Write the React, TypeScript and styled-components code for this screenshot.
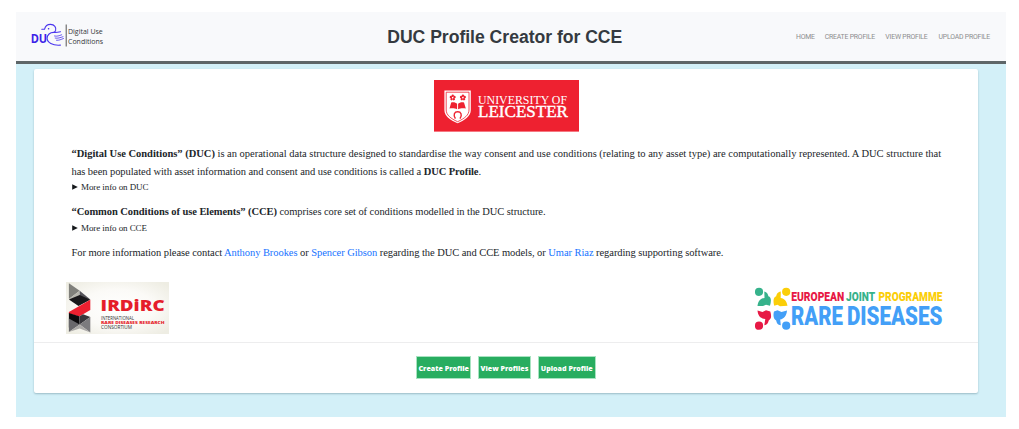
import React from "react";
import styled, { createGlobalStyle } from "styled-components";

const GlobalStyle = createGlobalStyle`
  * { box-sizing: border-box; }
  body { margin: 0; background: #fff; color: #212529; font-family: "Liberation Sans", Arial, sans-serif; }
`;

const Page = styled.div`
  width: 990px;
  height: 405px;
  margin: 12px 0 12px 16px;
  background: #d3f0f8;
`;

const Header = styled.header`
  height: 52px;
  display: grid;
  grid-template-columns: 1fr auto 1fr;
  align-items: center;
  padding: 0 15.5px 3px 14px;
  background: #f8f9fb;
  border-bottom: 3px solid #5e6668;
`;

const Title = styled.h1`
  margin: 3px 11px 0 0;
  font-size: 17.6px;
  line-height: 20px;
  letter-spacing: -0.02px;
  color: #343a40;
  white-space: nowrap;
`;

const Nav = styled.nav`
  display: flex;
  justify-content: flex-end;
  gap: 10.7px;
  padding-top: 4px;
`;

const NavLink = styled.a<{ $width: number }>`
  width: ${(p) => p.$width}px;
  font-family: Roboto, sans-serif;
  font-size: 6.9px;
  line-height: 10px;
  letter-spacing: -0.2px;
  color: #8c8d8e;
  white-space: nowrap;
`;

const Card = styled.main`
  display: flex;
  flex-direction: column;
  width: 944px;
  height: 324px;
  margin: 5px 0 0 18px;
  background: #fff;
  border-radius: 2px;
  box-shadow: 0 1px 2px rgba(70, 110, 125, 0.4);
`;

const Banner = styled.div`
  display: flex;
  justify-content: center;
  height: 76px;
  padding: 11px 0 0 1px;
`;

const Copy = styled.section`
  height: 137px;
  padding: 0 0 0 37.5px;
  font-family: "Liberation Serif", "Times New Roman", serif;
  font-size: 10.5px;
`;

const Line = styled.div<{ $spacing?: number }>`
  height: 17.5px;
  line-height: 17.5px;
  letter-spacing: ${(p) => p.$spacing ?? -0.063}px;
  white-space: nowrap;
`;

const Details = styled.details`
  height: 14px;
  margin-bottom: 9.3px;
  font-size: 9px;
  line-height: 14px;
`;

const Summary = styled.summary`
  display: flex;
  align-items: center;
  gap: 3.5px;
  letter-spacing: -0.08px;
`;

const Link = styled.a`
  color: #1673ff;
`;

const Partners = styled.div`
  display: flex;
  justify-content: space-between;
  height: 60px;
  padding: 0 31px 0 32px;
`;

const ProgrammeSlot = styled.div`
  padding-top: 5px;
`;

const Footer = styled.footer`
  display: flex;
  justify-content: center;
  gap: 6.5px;
  flex: 1;
  padding: 13px 0 0 0;
  border-top: 1px solid #ededee;
`;

const Button = styled.button<{ $width: number }>`
  width: ${(p) => p.$width}px;
  height: 23px;
  padding: 0;
  border: 1px solid #a8e3c1;
  background: #28ad60;
  color: #fff;
  font-family: "Open Sans", sans-serif;
  font-weight: 800;
  font-size: 7.1px;
  letter-spacing: 0;
  white-space: nowrap;
`;

const Logo = styled.svg`
  display: block;
  flex: none;
`;

const Arrow = () => (
  <svg width="6" height="6" viewBox="0 0 6 6">
    <path d="M0.2 0.2L5.8 3L0.2 5.8Z" fill="#15191c" />
  </svg>
);

const DucLogo = () => (
  <Logo width="76" height="28" viewBox="30 20 76 28">
    <text x="30.7" y="41.5" fontFamily="Open Sans" fontWeight="700" fontSize="13.2" fill="#3c22e8" textLength="16.5" lengthAdjust="spacingAndGlyphs">DU</text>
    <g fill="none" stroke="#4a35ee" strokeWidth="1.1" strokeLinecap="round">
      <path d="M41.8 28.3H44.5C45.3 25 47.5 23.4 50.5 23.4C54.5 23.4 56.5 26.4 55.6 29.5C55.2 30.5 54.6 31 54 31.4" />
      <path d="M60.5 30.7C58 31.3 56 31.7 54 31.4C50 31.2 47.1 33.9 47.1 37.3C47.1 41.3 52.5 44.8 60.4 44.1" />
      <path d="M54.5 35C57 35.6 59 34.8 61.7 33.8M55.2 37.1C58 37.6 60 36.7 63 35.7M56.5 39.3C59 39.5 61 38.5 63.5 37.5" strokeWidth=".8" />
    </g>
    <circle cx="48.6" cy="27.7" r=".8" fill="#3c22e8" />
    <path d="M66.2 23.5V45.5" stroke="#555" strokeWidth="1" />
    <g fontFamily="Open Sans" fontSize="7" fill="#34373a">
      <text x="68" y="33.4" textLength="34.8">Digital Use</text>
      <text x="68" y="43.2" textLength="35">Conditions</text>
    </g>
  </Logo>
);

const Rosette = ({ x, y }: { x: number; y: number }) => (
  <g fill="#ee2130">
    {[0, 72, 144, 216, 288].map((a) => (
      <circle key={a} cx={x} cy={y - 1.9} r="1.2" transform={`rotate(${a} ${x} ${y})`} />
    ))}
  </g>
);

const LeicesterLogo = () => (
  <Logo width="145" height="52" viewBox="0 0 145 52">
    <rect width="145" height="51.6" fill="#ee2130" />
    <path d="M10.4 10.5H36.8V30C36.8 36 31 40 23.6 43.3C16 40 10.4 36 10.4 30Z" fill="#fff" />
    <path d="M12.2 12.2H35V30C35 35 30.5 38.5 23.6 41.7C16.7 38.5 12.2 35 12.2 30Z" fill="none" stroke="#ee2130" strokeWidth=".8" />
    <Rosette x={18.7} y={17.6} />
    <Rosette x={28.9} y={17.6} />
    <path d="M15.5 28.4L17.2 22.4C20 22 22 22.6 23.1 23.8V29.3C21 28 18 28 15.5 28.4ZM31.8 28.4L30 22.4C27.3 22 25.3 22.6 24.1 23.8V29.3C26.3 28 29 28 31.8 28.4Z" fill="#ee2130" />
    <path d="M21.4 38.7C18.8 34.5 20.5 31.8 23.7 31.8S28.6 34.5 26 38.7" fill="none" stroke="#ee2130" strokeWidth="1.4" />
    <g fontFamily="Liberation Serif" fill="#fff">
      <text x="44" y="23.7" fontSize="12.4" textLength="89" lengthAdjust="spacingAndGlyphs">UNIVERSITY OF</text>
      <text x="44" y="37.2" fontSize="16.6" stroke="#fff" strokeWidth=".4" textLength="90" lengthAdjust="spacingAndGlyphs">LEICESTER</text>
    </g>
  </Logo>
);

const IrdircLogo = () => (
  <Logo width="103" height="52" viewBox="0 0 103 52">
    <defs>
      <radialGradient id="paper" cx="50%" cy="50%" r="65%">
        <stop offset="0" stopColor="#fff" />
        <stop offset=".55" stopColor="#fbfaf7" />
        <stop offset="1" stopColor="#eeede3" />
      </radialGradient>
    </defs>
    <rect width="103" height="52" fill="url(#paper)" />
    <path d="M2.9 1.3L13.7 8.7L2.9 17Z" fill="#80807b" />
    <path d="M2.9 17L13.7 8.7V17Z" fill="#b7b6ae" />
    <path d="M13.7 8.7L24.3 17.6L13.7 18Z" fill="#55545a" />
    <path d="M2.9 17.4L13.7 13L24.3 17.8L12.5 24Z" fill="#19181b" />
    <path d="M2.9 30L24.3 17.8V28L13.2 34.5L2.9 31.4Z" fill="#ec2030" />
    <path d="M2.9 31L13.2 34.3L13.7 42.4L2.9 45.5Z" fill="#0c0b0e" />
    <path d="M13.2 34.5L17 32.3L24.3 35L13.7 42.4Z" fill="#39383d" />
    <path d="M2.9 36.5L13.7 42.4L2.9 50Z" fill="#69686c" />
    <path d="M13.7 42.4L24.3 35V50.4Z" fill="#7c7b7e" />
    <path d="M2.9 50L13.7 42.4L24.3 50.4L13.7 46.5Z" fill="#acaaa8" />
    <g fontFamily="Open Sans">
      <text x="34.6" y="29.4" fontSize="16" fontWeight="800" fill="#e51d2b" textLength="64" lengthAdjust="spacingAndGlyphs">IRDiRC</text>
      <text x="35" y="37.8" fontSize="4.4" fill="#333" textLength="33" lengthAdjust="spacingAndGlyphs">INTERNATIONAL</text>
      <text x="35" y="42" fontSize="3.8" fontWeight="800" fill="#e51d2b" textLength="63.5" lengthAdjust="spacingAndGlyphs">RARE DISEASES RESEARCH</text>
      <text x="35" y="46.6" fontSize="4.4" fill="#333" textLength="31" lengthAdjust="spacingAndGlyphs">CONSORTIUM</text>
    </g>
  </Logo>
);

const RareDiseasesLogo = () => (
  <Logo width="192" height="44" viewBox="755 287 192 44">
    <g fill="#36b28b">
      <circle cx="759" cy="291.8" r="4.1" />
      <path d="M757.5 306C758.3 300.5 760.5 298.8 764.5 298L764.3 291.5C767 292 768 294 768.4 296.3C771.5 297 771.3 301.5 770 305.8L766 304.8L763 306Z" />
    </g>
    <g fill="#fbce08">
      <circle cx="786.2" cy="291.8" r="4.1" />
      <path d="M787.5 305.8C786.5 300.5 784.5 298.8 780.7 298L780.8 291.5C777.5 292 776.6 294 776.2 296.3C773.2 297 773 301.5 774.3 305.8L777.5 304.8L780 306.3Z" />
    </g>
    <g fill="#e71945">
      <circle cx="759" cy="325.7" r="4.1" />
      <path d="M757.5 310.5L762.5 312L766 310.3L770.3 311.5C771.6 316 771.5 319 768.7 320.4C768.2 323 767 324.8 764.3 325.2L765.3 319C760.5 318.5 758 316 757.5 310.5Z" />
    </g>
    <g fill="#439ff7">
      <circle cx="786.2" cy="325.7" r="4.1" />
      <path d="M774 311.5L777.5 310.3L781.5 312L787 310.5C786.6 316 784 318.6 780.2 319.6L780.8 325.3C777.6 324.6 776.6 323 776.2 320.4C773.4 319 773 315 774 311.5Z" />
    </g>
    <g fontFamily="Roboto" fontWeight="900" fontSize="12.4">
      <text x="791.3" y="301" fill="#e71945" textLength="53" lengthAdjust="spacingAndGlyphs">EUROPEAN</text>
      <text x="846" y="301" fill="#36b28b" textLength="29" lengthAdjust="spacingAndGlyphs">JOINT</text>
      <text x="878.5" y="301" fill="#fbce08" textLength="64" lengthAdjust="spacingAndGlyphs">PROGRAMME</text>
    </g>
    <g fontFamily="Roboto" fontWeight="900" fontSize="25.6" fill="#439ff7">
      <text x="791" y="324.7" textLength="52" lengthAdjust="spacingAndGlyphs">RARE</text>
      <text x="847" y="324.7" textLength="95.5" lengthAdjust="spacingAndGlyphs">DISEASES</text>
    </g>
  </Logo>
);

export default function App() {
  return (
    <>
      <GlobalStyle />
      <Page>
        <Header>
          <DucLogo />
          <Title>DUC Profile Creator for CCE</Title>
          <Nav>
            <NavLink $width={18}>HOME</NavLink>
            <NavLink $width={50}>CREATE PROFILE</NavLink>
            <NavLink $width={42.5}>VIEW PROFILE</NavLink>
            <NavLink $width={52}>UPLOAD PROFILE</NavLink>
          </Nav>
        </Header>
        <Card>
          <Banner>
            <LeicesterLogo />
          </Banner>
          <Copy>
            <Line $spacing={-0.014}>
              <b>“Digital Use Conditions” (DUC)</b> is an operational data structure designed to standardise the way consent and use conditions (relating to any asset type) are computationally represented. A DUC structure that
            </Line>
            <Line>
              has been populated with asset information and consent and use conditions is called a <b>DUC Profile</b>.
            </Line>
            <Details>
              <Summary><Arrow />More info on DUC</Summary>
            </Details>
            <Line>
              <b>“Common Conditions of use Elements” (CCE)</b> comprises core set of conditions modelled in the DUC structure.
            </Line>
            <Details>
              <Summary><Arrow />More info on CCE</Summary>
            </Details>
            <Line>
              For more information please contact <Link>Anthony Brookes</Link> or <Link>Spencer Gibson</Link> regarding the DUC and CCE models, or <Link>Umar Riaz</Link> regarding supporting software.
            </Line>
          </Copy>
          <Partners>
            <IrdircLogo />
            <ProgrammeSlot>
              <RareDiseasesLogo />
            </ProgrammeSlot>
          </Partners>
          <Footer>
            <Button $width={55}>Create Profile</Button>
            <Button $width={53.5}>View Profiles</Button>
            <Button $width={58}>Upload Profile</Button>
          </Footer>
        </Card>
      </Page>
    </>
  );
}
